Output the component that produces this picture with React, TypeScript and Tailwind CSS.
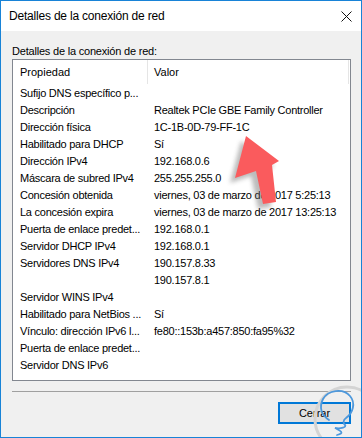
import React from "react";

const rows: [string, string][] = [
  ["Sufijo DNS específico p...", ""],
  ["Descripción", "Realtek PCIe GBE Family Controller"],
  ["Dirección física", "1C-1B-0D-79-FF-1C"],
  ["Habilitado para DHCP", "Sí"],
  ["Dirección IPv4", "192.168.0.6"],
  ["Máscara de subred IPv4", "255.255.255.0"],
  ["Concesión obtenida", "viernes, 03 de marzo de 2017 5:25:13"],
  ["La concesión expira", "viernes, 03 de marzo de 2017 13:25:13"],
  ["Puerta de enlace predet...", "192.168.0.1"],
  ["Servidor DHCP IPv4", "192.168.0.1"],
  ["Servidores DNS IPv4", "190.157.8.33"],
  ["", "190.157.8.1"],
  ["Servidor WINS IPv4", ""],
  ["Habilitado para NetBios ...", "Sí"],
  ["Vínculo: dirección IPv6 l...", "fe80::153b:a457:850:fa95%32"],
  ["Puerta de enlace predet...", ""],
  ["Servidor DNS IPv6", ""],
];

function Arrow() {
  return (
    <svg
      className="absolute left-[225px] top-[130px] h-[80px] w-[60px]"
      viewBox="0 0 60 80"
    >
      <defs>
        <filter id="sh" x="-50%" y="-50%" width="200%" height="200%">
          <feGaussianBlur stdDeviation="2" />
        </filter>
      </defs>
      <polygon
        points="15,10 48,35 41,39 45,76 32,78 25,45 4,52"
        fill="#6b6b6b"
        opacity="0.45"
        filter="url(#sh)"
      />
      <polygon
        points="20,5 53,30 46,34 50,71 37,73 30,40 9,47"
        fill="#fa5b5d"
      />
    </svg>
  );
}

function Watermark() {
  return (
    <svg
      className="absolute left-[300px] top-[376px] h-[61px] w-[61px]"
      viewBox="0 0 61 61"
    >
      <circle cx="46" cy="42" r="32" fill="none" stroke="#d4d4d4" strokeWidth="3" />
      <path
        d="M28 43 C20 38 18 30 22 22 C27 13 42 11 49 19 C55 26 52 36 45 41 C42 43 42 46 44 48 C46 50 40 52 34 51 C40 54 44 56 36 58"
        fill="none"
        stroke="#4d98dc"
        strokeWidth="1.8"
        strokeLinecap="round"
      />
    </svg>
  );
}

export default function App() {
  return (
    <div
      className="relative h-[438px] w-[362px] overflow-hidden border border-[#1883d7] bg-[#f0f0f0] text-[11px] text-black"
      style={{ fontFamily: '"Segoe UI", "Liberation Sans", Arial, sans-serif' }}
    >
      {/* title bar */}
      <div className="flex h-[30px] items-center justify-between bg-white pl-[8px] pr-[9px]">
        <span className="text-[12px] tracking-[-0.2px]">Detalles de la conexión de red</span>
        <svg width="11" height="11" viewBox="0 0 11 11">
          <path d="M0.5 0.5 L10.5 10.5 M10.5 0.5 L0.5 10.5" stroke="#111" strokeWidth="1" />
        </svg>
      </div>

      <div className="flex flex-col pl-[11px] pr-[10px]">
        <div className="mt-[12px] h-[16px] leading-[16px] tracking-[-0.2px]">
          Detalles de la conexión de red:
        </div>

        <div className="h-[322px] border border-[#828790] bg-white">
          <div className="flex h-[24px] items-center">
            <div className="flex h-full w-[135px] items-center border-r border-[#e5e5e5] pl-[7px]">
              Propiedad
            </div>
            <div className="mr-[1px] flex h-full flex-1 items-center border-r border-[#e5e5e5] pl-[6px]">
              Valor
            </div>
          </div>
          <div className="mt-[0.5px] flex flex-col">
            {rows.map(([k, v], i) => (
              <div key={i} className="flex h-[17px] items-center tracking-[-0.25px]">
                <div className="w-[135px] shrink-0 overflow-hidden whitespace-nowrap pl-[7px]">{k}</div>
                <div className="whitespace-nowrap pl-[6px]">{v}</div>
              </div>
            ))}
          </div>
        </div>

        <div className="mt-[10px] h-px bg-[#a0a0a0]" />

        <div className="mt-[10px] flex justify-end">
          <button
            type="button"
            className="flex h-[22px] w-[73px] items-center justify-center border-2 border-[#0078d7] bg-[#e1e1e1] text-[11px]"
          >
            Cerrar
          </button>
        </div>
      </div>

      <Arrow />
      <Watermark />
    </div>
  );
}
